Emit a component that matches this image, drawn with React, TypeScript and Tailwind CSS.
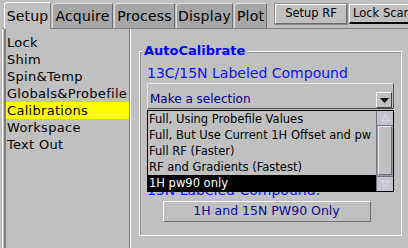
import React from 'react'

const tabs = [
  { label: 'Setup', w: 'w-[47px]', active: true },
  { label: 'Acquire', w: 'w-[61px]' },
  { label: 'Process', w: 'w-[61px]' },
  { label: 'Display', w: 'w-[57px]' },
  { label: 'Plot', w: 'w-[33px]' },
]

const pages = ['Lock', 'Shim', 'Spin&Temp', 'Globals&Probefile', 'Calibrations', 'Workspace', 'Text Out']

const options = [
  'Full, Using Probefile Values',
  'Full, But Use Current 1H Offset and pw',
  'Full RF (Faster)',
  'RF and Gradients (Fastest)',
  '1H pw90 only',
]

export default function App() {
  return (
    <div className="relative w-[408px] h-[248px] overflow-hidden bg-[#c0c0c0] text-black font-['DejaVu_Sans',sans-serif]">
      {/* Tab strip */}
      <div className="flex items-end h-[28px] pl-[4px]">
        {tabs.map((t) =>
          t.active ? (
            <div
              key={t.label}
              className={`${t.w} shrink-0 h-[27px] mr-[1px] bg-[#c0c0c0] border-t border-l border-white border-r border-r-[#808080] rounded-tl-[3px] flex items-center justify-center text-[14px] tracking-[0.2px] relative z-10 -mb-px`}
            >
              {t.label}
            </div>
          ) : (
            <div
              key={t.label}
              className={`${t.w} shrink-0 h-[25px] mr-[1px] bg-[#a6a6a6] border-t border-l border-[#dcdcdc] border-r border-r-[#6e6e6e] rounded-tl-[3px] flex items-center justify-center text-[14px] tracking-[0.2px]`}
            >
              {t.label}
            </div>
          )
        )}
        <div className="flex shrink-0 self-start mt-[4px] ml-[7px]">
          <button className="w-[72px] shrink-0 h-[20px] bg-[#c0c0c0] border border-white border-r-[#6a6a6a] border-b-[#6a6a6a] outline outline-1 outline-[#8a8a8a] text-[11.5px] leading-none flex items-center justify-center">
            Setup RF
          </button>
          <button className="w-[70px] shrink-0 h-[20px] ml-[2px] bg-[#c0c0c0] border border-white border-r-[#6a6a6a] border-b-2 border-b-black text-[11.5px] leading-none flex items-center justify-start pl-[3px] whitespace-nowrap">
            Lock Scan
          </button>
        </div>
      </div>

      {/* Body */}
      <div className="flex h-[220px] border-t border-[#808080] ml-[2px]">
        {/* Page list */}
        <div className="w-[128px] shrink-0 h-full border-l border-white pl-[1px]">
          <div className="h-full border-l-2 border-[#808080] border-r border-r-[#808080] pt-[5px]">
            {pages.map((p) => (
              <div
                key={p}
                className={`h-[17px] leading-[17px] text-[13px] tracking-[0.3px] pl-[1px] whitespace-nowrap ${p === 'Calibrations' ? 'bg-[#ffff00]' : ''}`}
              >
                {p}
              </div>
            ))}
          </div>
        </div>

        {/* Right panel */}
        <div className="flex-1 h-full border-l border-white pt-[22px] pl-[8px] pr-[6px]">
          <div className="relative h-[185px] border border-white shadow-[inset_1px_1px_0_#8a8a8a]">
            <div className="absolute -top-[10px] left-[2px] bg-[#c0c0c0] px-[2px] text-[13px] font-bold text-[#0000ff] leading-[18px]">
              AutoCalibrate
            </div>
            <div className="pt-[12px] pl-[7px] text-[14px] text-[#1010ff] leading-[18px]">
              13C/15N Labeled Compound
            </div>
            <div className="ml-[7px] mr-[7px] mt-[1px] h-[26px] border border-[#e4e4e4] border-b-[#505050] border-r-[#505050] flex items-end">
              <div className="flex-1 pl-[2px] text-[12px] text-[#00007a] leading-[16px] pb-[1px]">Make a selection</div>
              <div className="w-[16px] h-[16px] mr-[1px] border border-white border-r-[#404040] border-b-[#404040] flex items-center justify-center">
                <svg width="9" height="5" viewBox="0 0 9 5">
                  <path d="M0 0H9L4.5 5Z" fill="#000" />
                </svg>
              </div>
            </div>
            <div className="mt-[72px] pl-[7px] text-[14px] text-[#1010ff] leading-[18px]">
              15N Labeled Compound:
            </div>
            <div className="flex justify-center mt-[2px] pr-[8px]">
              <button className="w-[208px] h-[21px] bg-[#c0c0c0] border border-white border-r-[#707070] border-b-[#707070] text-[12.5px] text-[#0a0a96] leading-none">
                1H and 15N PW90 Only
              </button>
            </div>

            {/* Open combo list */}
            <div className="absolute left-[7px] top-[58px] w-[247px] h-[82px] bg-[#c0c0c0] border border-black flex">
              <div className="flex-1 overflow-hidden">
                {options.map((o) => (
                  <div
                    key={o}
                    className={`h-[16px] leading-[16px] text-[11.5px] pl-[1px] whitespace-nowrap ${o === '1H pw90 only' ? 'bg-black text-white' : 'text-black'}`}
                  >
                    {o}
                  </div>
                ))}
              </div>
              <div className="w-[17px] h-full bg-[#9c9cac] flex flex-col border-l border-[#707080]">
                <div className="h-[15px] bg-[#c4c4cc] border-b border-[#707080] flex items-center justify-center">
                  <svg width="9" height="8" viewBox="0 0 9 8">
                    <path d="M4.5 1L8 7H1Z" fill="none" stroke="#f2f2f2" strokeDasharray="1 1" />
                  </svg>
                </div>
                <div className="h-[49px] mx-[1px] bg-[#c0c0c0] border border-[#e8e8e8] border-r-[#707070] border-b-[#707070]" />
                <div className="flex-1" />
                <div className="h-[15px] bg-[#c4c4cc] border-t border-[#707080] flex items-center justify-center">
                  <svg width="9" height="8" viewBox="0 0 9 8">
                    <path d="M4.5 7L8 1H1Z" fill="none" stroke="#f2f2f2" strokeDasharray="1 1" />
                  </svg>
                </div>
              </div>
            </div>
          </div>
        </div>
      </div>
    </div>
  )
}
